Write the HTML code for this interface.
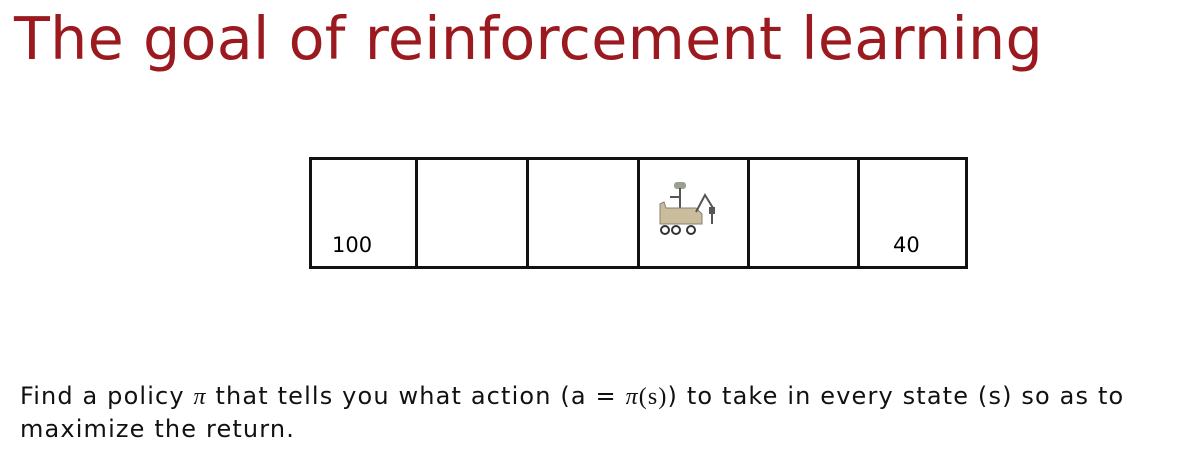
<!DOCTYPE html>
<html><head><style>
body{margin:0;width:1179px;height:458px;background:#fff;position:relative;overflow:hidden;font-family:"DejaVu Sans","Liberation Sans",sans-serif}
h1{position:absolute;left:14px;top:5px;margin:0;font-weight:normal;font-size:58.7px;color:#9b1a1f;white-space:nowrap;letter-spacing:0.3px}
.b{position:absolute;top:157px;height:112px;border:3px solid #111;box-sizing:border-box}
.n{position:absolute;font-size:21px;top:233px}
p{position:absolute;left:20px;top:380px;margin:0;font-size:24px;letter-spacing:1.15px;line-height:32px;color:#111;width:1160px;white-space:nowrap}
</style></head><body>
<h1>The goal of reinforcement learning</h1>
<div class="b" style="left:309px;width:109px"></div>
<div class="b" style="left:415px;width:114px"></div>
<div class="b" style="left:526px;width:114px"></div>
<div class="b" style="left:637px;width:113px"></div>
<div class="b" style="left:747px;width:113px"></div>
<div class="b" style="left:857px;width:111px"></div>
<div class="n" style="left:332px">100</div>
<div class="n" style="left:893px">40</div>
<svg style="position:absolute;left:650px;top:178px" width="75" height="70" viewBox="0 0 75 70">
<rect x="24" y="4" width="12" height="7" rx="3" fill="#9aa090"/>
<line x1="30" y1="10" x2="30" y2="33" stroke="#555" stroke-width="2"/>
<line x1="20" y1="19" x2="30" y2="19" stroke="#555" stroke-width="2"/>
<path d="M10 26 L14 24 L16 30 L46 30 L52 36 L52 46 L10 46 Z" fill="#c9bd9b" stroke="#8a8070" stroke-width="1"/>
<path d="M46 34 L55 17 L63 30" stroke="#555" stroke-width="2" fill="none"/>
<rect x="59" y="29" width="6" height="7" fill="#555"/>
<line x1="62" y1="36" x2="62" y2="46" stroke="#555" stroke-width="2"/>
<circle cx="15" cy="52" r="4" fill="none" stroke="#333" stroke-width="2"/>
<circle cx="26" cy="52" r="4" fill="none" stroke="#333" stroke-width="2"/>
<circle cx="41" cy="52" r="4" fill="none" stroke="#333" stroke-width="2"/>
</svg>
<p>Find a policy <span style="font-family:'Liberation Serif',serif;font-style:italic">π</span> that tells you what action (a = <span style="font-family:'Liberation Serif',serif"><i>π</i>(s)</span>) to take in every state (s) so as to<br>maximize the return.</p>
</body></html>
